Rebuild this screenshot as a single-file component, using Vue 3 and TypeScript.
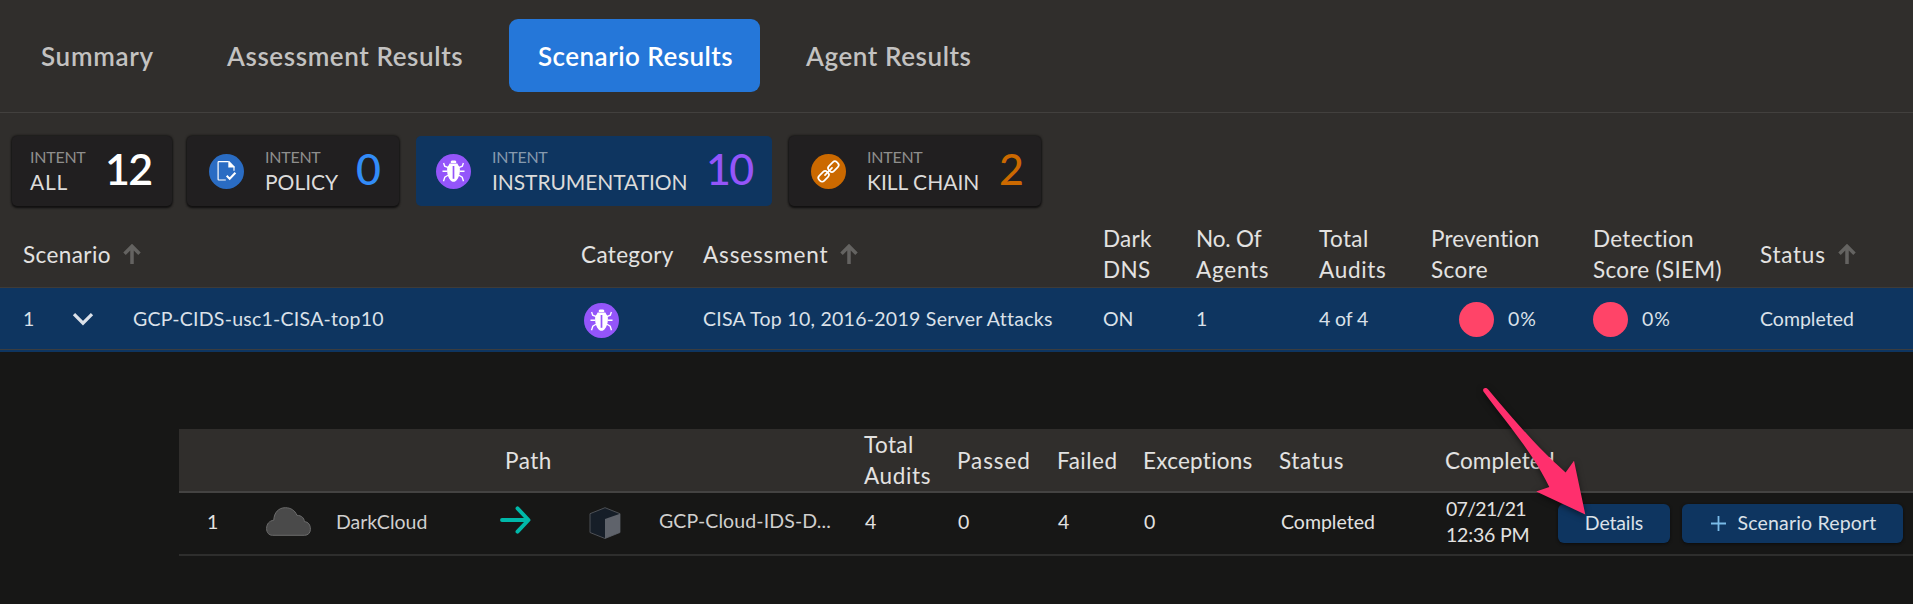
<script setup lang="ts">
import { h } from 'vue'

interface Label { text: string; track: number }

const tabs = [
  { text: 'Summary', track: 0.68, id: 'summary' },
  { text: 'Assessment Results', track: 0.6, id: 'assessment' },
  { text: 'Scenario Results', track: 0.46, id: 'scenario', active: true },
  { text: 'Agent Results', track: 0.58, id: 'agent' },
]

const intents = [
  { id: 'all', text: 'ALL', track: 0.7, count: 12, icon: '' },
  { id: 'policy', text: 'POLICY', track: 0, count: 0, icon: 'policy' },
  { id: 'instrumentation', text: 'INSTRUMENTATION', track: -0.08, count: 10, icon: 'bug', active: true },
  { id: 'kill', text: 'KILL CHAIN', track: 0, count: 2, icon: 'chain' },
]

const columns: { lines: Label[]; sort?: boolean; id: string }[] = [
  { id: 'scenario', lines: [{ text: 'Scenario', track: 0.4 }], sort: true },
  { id: 'category', lines: [{ text: 'Category', track: 0.35 }] },
  { id: 'assessment', lines: [{ text: 'Assessment', track: 0.85 }], sort: true },
  { id: 'dns', lines: [{ text: 'Dark', track: 0.3 }, { text: 'DNS', track: 0.3 }] },
  { id: 'agents', lines: [{ text: 'No. Of', track: -0.15 }, { text: 'Agents', track: 0.75 }] },
  { id: 'audits', lines: [{ text: 'Total', track: 0.4 }, { text: 'Audits', track: 0.7 }] },
  { id: 'prevention', lines: [{ text: 'Prevention', track: 0.15 }, { text: 'Score', track: 0.4 }] },
  { id: 'detection', lines: [{ text: 'Detection', track: 0.3 }, { text: 'Score (SIEM)', track: 0.3 }] },
  { id: 'status', lines: [{ text: 'Status', track: 0.75 }], sort: true },
]

const pathColumns: { id: string; lines: Label[] }[] = [
  { id: 'path', lines: [{ text: 'Path', track: 0.5 }] },
  { id: 'total', lines: [{ text: 'Total', track: 0.4 }, { text: 'Audits', track: 0.65 }] },
  { id: 'passed', lines: [{ text: 'Passed', track: 0.9 }] },
  { id: 'failed', lines: [{ text: 'Failed', track: 0.5 }] },
  { id: 'exceptions', lines: [{ text: 'Exceptions', track: 0.25 }] },
  { id: 'pstatus', lines: [{ text: 'Status', track: 0.65 }] },
  { id: 'completed', lines: [{ text: 'Completed', track: 0.15 }] },
]

const spacing = (track: number) => ({ letterSpacing: `${track}px` })

const BugIcon = () =>
  h('svg', { width: 35, height: 35, viewBox: '0 0 35 35' }, [
    h('circle', { cx: 17.5, cy: 17.5, r: 17.5, fill: '#9455fa' }),
    h('path', {
      fill: '#fff',
      d: 'M14.800 9V7.200l1-.7h3.400l1 .7V9zM12.600 11.600l1-2h7.800l1 2c1.200 1 1.500 2.600 1.500 4.400 0 4.400-1.300 8.400-3.500 10.400-.9.8-1.700 1.400-2.900 1.400s-2-.6-2.900-1.400C12.400 24.400 11.100 20.400 11.100 16c0-1.800.3-3.400 1.500-4.400z',
    }),
    h('path', { stroke: '#9455fa', 'stroke-width': 1.7, d: 'M17.500 12v12.800' }),
    h('path', {
      stroke: '#fff', 'stroke-width': 1.35, fill: 'none',
      d: 'M7.600 9l1.100 3.200 3.600 1.500M6.500 17.200h5M7.500 27.300l1.300-4 3.200-2M27.400 9l-1.100 3.200-3.600 1.500M28.500 17.200h-5M27.500 27.300l-1.300-4-3.200-2',
    }),
  ])
const PolicyIcon = () =>
  h('svg', { width: 35, height: 35, viewBox: '0 0 35 35' }, [
    h('circle', { cx: 17.5, cy: 17.5, r: 17.5, fill: '#2a6cc3' }),
    h('path', {
      stroke: '#fff', 'stroke-width': 1.2, fill: 'none', 'stroke-linejoin': 'round',
      d: 'M25 12.500v4.300M19.500 7.700H9.800a.7.7 0 0 0-.7.7v16.900a.7.7 0 0 0 .7.7h7',
    }),
    h('path', { fill: '#fff', d: 'M19.300 7.100h.9l5.400 5.500v1h-6.300z' }),
    h('path', { stroke: '#fff', 'stroke-width': 2, fill: 'none', d: 'M17.700 21.700l3 3 5.700-6' }),
  ])
const ChainIcon = () =>
  h('svg', { width: 35, height: 35, viewBox: '0 0 35 35' }, [
    h('circle', { cx: 17.5, cy: 17.5, r: 17.5, fill: '#cb6900' }),
    h('g', { transform: 'rotate(-45 17.500 17.500)', stroke: '#fff', 'stroke-width': 1.7, fill: 'none' }, [
      h('rect', { x: 5, y: 14, width: 11.2, height: 7, rx: 2.8 }),
      h('rect', { x: 18.8, y: 14, width: 11.2, height: 7, rx: 2.8 }),
      h('path', { d: 'M12.500 17.500h10', 'stroke-linecap': 'round' }),
    ]),
  ])
const icons: Record<string, () => ReturnType<typeof h>> = { bug: BugIcon, policy: PolicyIcon, chain: ChainIcon }
</script>

<template>
  <main class="page">
    <nav class="tabs">
      <a v-for="t in tabs" :key="t.id" :class="['tab', t.id, { active: t.active }]">
        <span :style="spacing(t.track)">{{ t.text }}</span>
      </a>
    </nav>

    <section class="intents">
      <div v-for="i in intents" :key="i.id" :class="['card', i.id, { active: i.active }]">
        <component :is="icons[i.icon]" v-if="i.icon" class="badge" />
        <div class="intent-text">
          <small>INTENT</small>
          <b :style="spacing(i.track)">{{ i.text }}</b>
        </div>
        <strong>{{ i.count }}</strong>
      </div>
    </section>

    <section>
      <header class="grid head">
        <div v-for="c in columns" :key="c.id" :class="['cell', c.id]">
          <div>
            <div v-for="l in c.lines" :key="l.text" :style="spacing(l.track)">{{ l.text }}</div>
          </div>
          <svg v-if="c.sort" class="sort" width="18" height="20" viewBox="0 0 18 20">
            <path d="M9 20V3M1.500 9.700L9 2.200l7.500 7.500" fill="none" stroke="#646361" stroke-width="3.500" />
          </svg>
        </div>
      </header>

      <div class="grid row">
        <span>1</span>
        <svg class="chevron" width="22" height="14" viewBox="0 0 22 14">
          <path d="M2 2.200l9 9 9-9" fill="none" stroke="#dbe1e9" stroke-width="3.200" />
        </svg>
        <span :style="spacing(0.25)">GCP-CIDS-usc1-CISA-top10</span>
        <BugIcon class="badge category-icon" />
        <span :style="spacing(0.27)">CISA Top 10, 2016-2019 Server Attacks</span>
        <span>ON</span>
        <span>1</span>
        <span :style="spacing(-0.1)">4 of 4</span>
        <div class="score prevention-score"><i></i><span>0%</span></div>
        <div class="score"><i></i><span>0%</span></div>
        <span>Completed</span>
      </div>
    </section>

    <section class="detail">
      <header class="path-grid path-head">
        <div v-for="c in pathColumns" :key="c.id" :class="['cell', c.id]">
          <div>
            <div v-for="l in c.lines" :key="l.text" :style="spacing(l.track)">{{ l.text }}</div>
          </div>
        </div>
      </header>
      <div class="path-grid path-row">
        <span class="num">1</span>
        <svg class="cloud" width="45" height="29" viewBox="0 0 45 29">
          <path d="M6.500 28.300h32.200c3.400 0 5.700-2.500 5.700-6 0-4.500-2-7.300-6-7.700-.3-3.600-2.700-6.100-7.500-6.300C29 3.400 24.800.7 19.300.7 12.600.7 8 5.600 7.800 13.200 3.200 13.800.6 17 .6 21.500c0 4.200 2.400 6.800 5.900 6.800z" fill="#4a4a4a" stroke="#6c6c6c" />
        </svg>
        <span class="source">DarkCloud</span>
        <svg class="arrow" width="31" height="28" viewBox="0 0 31 28">
          <path d="M2 14h26M17.500 2.300L28.500 14l-11 11.700" fill="none" stroke="#00b8a9" stroke-width="3.900" stroke-linecap="round" stroke-linejoin="round" />
        </svg>
        <svg class="cube" width="32" height="32" viewBox="0 0 32 32">
          <path d="M16 .7l15 6v18.800l-15 6-15-6V6.700z" fill="#161e28" stroke="#54575c" stroke-width=".9" />
          <path d="M16 12l15-5.300v18.800l-15 6z" fill="#5f636b" />
        </svg>
        <span class="target">GCP-Cloud-IDS-D...</span>
        <span>4</span>
        <span>0</span>
        <span>4</span>
        <span>0</span>
        <span>Completed</span>
        <div class="date">
          <div :style="spacing(-0.7)">07/21/21</div>
          <div :style="spacing(-0.2)">12:36 PM</div>
        </div>
        <button class="details">Details</button>
        <button class="report">
          <svg width="15" height="15" viewBox="0 0 15 15">
            <path d="M7.500 0v15M0 7.500h15" stroke="#79bbe8" stroke-width="1.800" />
          </svg>
          <span>Scenario Report</span>
        </button>
      </div>
    </section>

    <svg class="pointer" width="130" height="146" viewBox="0 0 130 146">
      <path d="M13.300 12.200C12.200 8.600 16.200 8 18 10.200C42 38.500 68 69.500 95.600 93.400L104 81.800L115.300 135.500L66.200 112.600L79.300 107.900C62 72.500 37 44.500 13.300 12.200z" fill="#ff2f6d" transform="translate(0 -1)" />
    </svg>
  </main>
</template>

<style scoped>
.page {
  position: relative;
  width: 1913px;
  height: 604px;
  overflow: hidden;
  background: #171716;
  color: #e3e2e1;
  font-family: 'Lato', 'Open Sans', sans-serif;
}
.tabs {
  display: flex;
  align-items: center;
  box-sizing: border-box;
  height: 113px;
  padding: 0 0 2px 12px;
  background: #302e2c;
  border-bottom: 1px solid #42403e;
}
.tab {
  box-sizing: border-box;
  height: 73px;
  padding: 0 28px 0 29px;
  border-radius: 9px;
  color: #c3c2c1;
  font-size: 26px;
  font-weight: 600;
  line-height: 74px;
  white-space: nowrap;
}
.tab.summary { width: 186px; }
.tab.assessment { width: 311px; }
.tab.scenario { width: 251px; }
.tab.agent { margin-left: 17px; }
.tab.active { background: #2577d9; color: #fff; }

.intents {
  display: flex;
  gap: 15px;
  box-sizing: border-box;
  height: 109px;
  padding: 23px 0 0 12px;
  background: #302e2c;
}
.card {
  display: flex;
  align-items: center;
  box-sizing: border-box;
  height: 70px;
  padding-left: 22px;
  border-radius: 5px;
  background: #211f20;
  box-shadow: 0 2px 2px 0 #121111, 0 0 2px 1px #1b1a19;
}
.card.all { width: 160px; padding-left: 18px; }
.card.policy { width: 212px; }
.card.instrumentation { width: 356px; margin-left: 2px; padding-left: 20px; }
.card.kill { width: 252px; margin-left: 2px; }
.card.active { background: #0e3560; box-shadow: none; }
.badge { display: block; flex: none; }
.intent-text {
  display: flex;
  flex-direction: column;
  flex: none;
  margin-left: 21px;
  padding-bottom: 3px;
  white-space: nowrap;
}
.all .intent-text { width: 75px; margin-left: 0; }
.policy .intent-text { width: 91px; }
.instrumentation .intent-text { width: 214px; }
.kill .intent-text { width: 132px; }
.intent-text small {
  height: 25px;
  color: #8f8e8d;
  font-size: 16px;
  letter-spacing: -0.25px;
  line-height: 25px;
}
.active .intent-text small { color: #8699ae; }
.intent-text b {
  height: 27px;
  color: #dcdbda;
  font-size: 21px;
  font-weight: 400;
  line-height: 26px;
}
.card strong {
  padding-bottom: 4px;
  font-size: 43px;
  font-weight: 500;
  letter-spacing: -1.8px;
  line-height: 56px;
}
.all strong { color: #fff; font-weight: 600; }
.policy strong { color: #328cf8; }
.instrumentation strong { color: #9455fa; }
.kill strong { color: #cb6900; }

.grid {
  display: grid;
  grid-template-columns: 49px 61px 448px 122px 400px 93px 123px 111px 163px 167px 1fr;
  align-items: center;
  box-sizing: border-box;
  padding-left: 23px;
  white-space: nowrap;
}
.head {
  height: 66px;
  padding-bottom: 1px;
  background: #302e2c;
  border-bottom: 1px solid #3e3b38;
  font-size: 22.5px;
  line-height: 31px;
}
.cell { display: flex; align-items: center; }
.cell.scenario { grid-column: 1 / 4; }
.cell.prevention { padding-left: 1px; }
.sort { margin-left: 12px; }
.row {
  height: 64px;
  padding-bottom: 1px;
  background:
    linear-gradient(#3a3d40, #3a3d40) 0 61px / 100% 1px no-repeat,
    #0e3560;
  color: #dbe1e9;
  font-size: 19.5px;
}
.row span { padding-bottom: 2px; }
.chevron { margin-bottom: 1px; }
.category-icon { margin: 1px 0 0 3px; }
.score { display: flex; align-items: center; gap: 14px; letter-spacing: 1px; }
.score i { width: 35px; height: 35px; border-radius: 50%; background: #ff4468; }
.prevention-score { padding-left: 29px; }

.detail { padding: 77px 0 0 179px; }
.path-grid {
  display: grid;
  align-items: center;
  box-sizing: border-box;
  white-space: nowrap;
}
.path-head {
  grid-template-columns: 359px 93px 100px 86px 136px 166px 1fr;
  height: 64px;
  padding: 0 0 2px 326px;
  background: #302e2c;
  border-bottom: 2px solid #444342;
  font-size: 22.5px;
  line-height: 31px;
}
.path-row {
  grid-template-columns: 58px 70px 164px 89px 70px 206px 93px 100px 86px 137px 165px 112px 124px 221px;
  height: 63px;
  padding: 0 0 0 29px;
  border-bottom: 2px solid #2e2e2d;
  font-size: 19.5px;
}
.path-row > span { padding-bottom: 4px; }
.path-row .num { margin-left: -1px; }
.path-row .source { padding-bottom: 5px; color: #d0cfce; }
.path-row .target { padding-bottom: 7px; color: #d0cfce; letter-spacing: 0.12px; }
.cloud { margin-bottom: 4px; }
.arrow { margin: 0 0 7px; }
.cube { margin-bottom: 1px; }
.date { padding-bottom: 4px; line-height: 26px; }
button {
  display: flex;
  align-items: center;
  justify-content: center;
  box-sizing: border-box;
  height: 39px;
  padding: 0 0 3px;
  border: 0;
  border-radius: 6px;
  background: #0e3560;
  box-shadow: 0 1px 3px #0c0c0c;
  color: #dbe1e9;
  font: inherit;
  white-space: nowrap;
}
.details { width: 112px; letter-spacing: -0.15px; }
.report { gap: 11px; width: 221px; padding-left: 3px; letter-spacing: 0.18px; }
.report svg { margin-top: 2px; }
.pointer {
  position: absolute;
  top: 380px;
  left: 1470px;
  filter: drop-shadow(0 2px 3px rgba(0, 0, 0, 0.5));
}
</style>
